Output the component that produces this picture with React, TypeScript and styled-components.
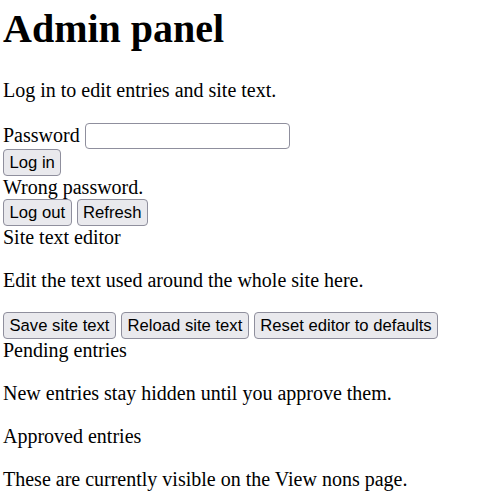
import React from 'react'
import styled, { createGlobalStyle } from 'styled-components'

const GlobalStyle = createGlobalStyle`
  html, body {
    margin: 0;
    padding: 0;
    background: #ffffff;
  }
  body {
    font-family: 'Liberation Serif', 'Times New Roman', serif;
    font-size: 20px;
    line-height: 23px;
    color: #000000;
  }
`

const Page = styled.main`
  padding: 0 3px;
`

const Title = styled.h1`
  margin: 6px 0 27px;
  font-size: 40px;
  line-height: 46px;
  font-weight: bold;
`

const Para = styled.p`
  margin: 20px 0;
`

const SectionLabel = styled.div`
  margin: 0;
`

const FieldRow = styled.label`
  display: flex;
  align-items: center;
  gap: 5px;
  height: 27px;
`

const TextInput = styled.input`
  box-sizing: border-box;
  width: 205px;
  height: 26px;
  margin: 0;
  padding: 1px 3px;
  border: 1px solid #8f8f9d;
  border-radius: 4px;
  background: #ffffff;
  font-family: 'Liberation Sans', Arial, sans-serif;
  font-size: 16.67px;
`

const ButtonRow = styled.div`
  display: flex;
  gap: 5px;
`

const Button = styled.button`
  box-sizing: border-box;
  height: 27px;
  margin: 0;
  padding: 1px 5.5px;
  border: 1px solid #8f8f9d;
  border-radius: 4px;
  background: #e9e9ed;
  color: #000000;
  font-family: 'Liberation Sans', Arial, sans-serif;
  font-size: 16.67px;
  line-height: 22px;
  cursor: pointer;
`

const Message = styled.div`
  margin: 0;
`

export default function App() {
  return (
    <Page>
      <GlobalStyle />
      <Title>Admin panel</Title>
      <Para>Log in to edit entries and site text.</Para>
      <FieldRow>
        Password
        <TextInput type="password" />
      </FieldRow>
      <ButtonRow>
        <Button>Log in</Button>
      </ButtonRow>
      <Message>Wrong password.</Message>
      <ButtonRow>
        <Button>Log out</Button>
        <Button>Refresh</Button>
      </ButtonRow>
      <SectionLabel>Site text editor</SectionLabel>
      <Para>Edit the text used around the whole site here.</Para>
      <ButtonRow>
        <Button>Save site text</Button>
        <Button>Reload site text</Button>
        <Button>Reset editor to defaults</Button>
      </ButtonRow>
      <SectionLabel>Pending entries</SectionLabel>
      <Para>New entries stay hidden until you approve them.</Para>
      <SectionLabel>Approved entries</SectionLabel>
      <Para>These are currently visible on the View nons page.</Para>
    </Page>
  )
}
